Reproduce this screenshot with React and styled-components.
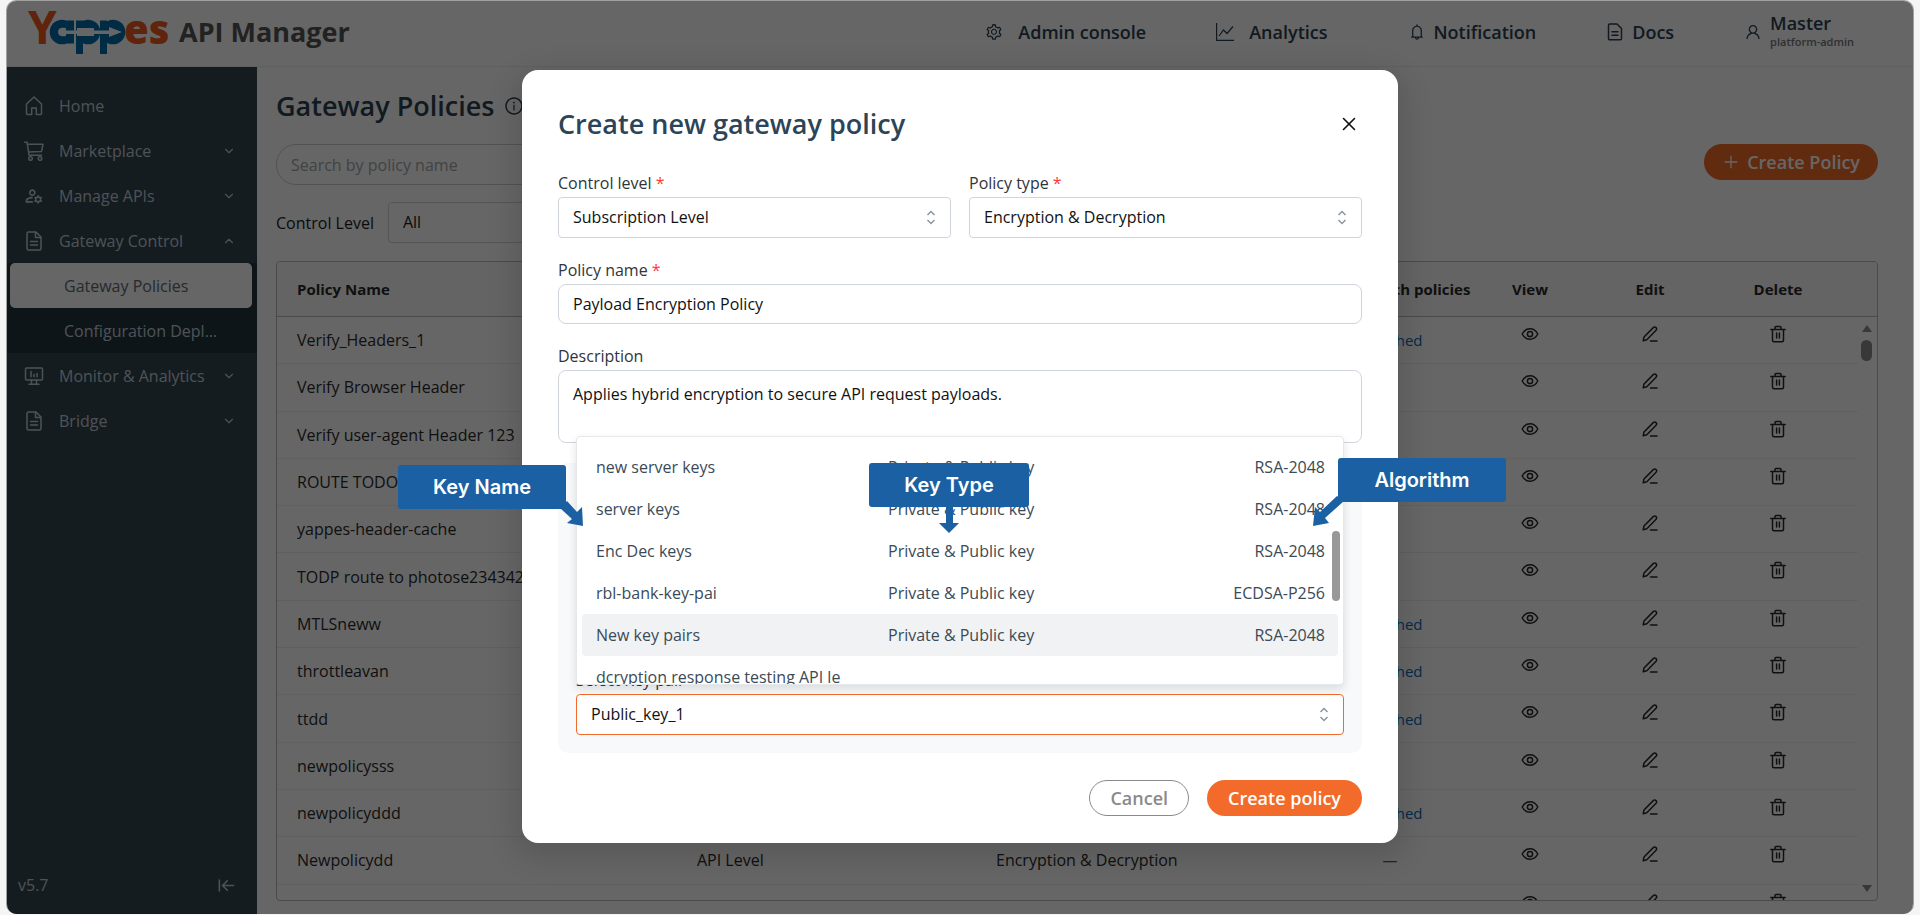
import React from 'react';
import styled, { createGlobalStyle } from 'styled-components';
import {
  AiOutlineSetting,
  AiOutlineBell,
  AiOutlineUser,
  AiOutlineInfoCircle,
  AiOutlinePlus,
} from 'react-icons/ai';
import { MdOutlineManageAccounts } from 'react-icons/md';
import { ArrowLeftToLine, ChevronDown, ChevronUp, X } from 'lucide-react';

const GlobalStyle = createGlobalStyle`
  *, *::before, *::after { box-sizing: border-box; }
  html, body, #root { height: 100%; }
  body {
    margin: 0;
    background: #f5f5f5;
    color: #1c1c1c;
    font-family: "Open Sans", "Noto Sans", sans-serif;
    font-size: 16px;
    line-height: 24px;
  }
  button, input, select, textarea { font: inherit; color: inherit; }
  button { border: 0; padding: 0; background: none; cursor: pointer; }
  a { color: inherit; text-decoration: none; }
  h1, h2, ul { margin: 0; padding: 0; }
  ul { list-style: none; }
`;

const Frame = styled.div`
  position: relative;
  display: flex;
  flex-direction: column;
  height: calc(100% - 1px);
  margin: 0 6px;
  border: 1px solid #a0a0a0;
  border-bottom: 0;
  border-radius: 10px;
  background: #fff;
  overflow: hidden;
`;

/* ---------- top bar ---------- */

const TopBar = styled.header`
  display: flex;
  align-items: center;
  flex: none;
  height: 66px;
  padding: 0 59px 4px 20px;
  border-bottom: 1px solid #f0f0f0;
`;

const Logo = styled.svg`
  width: 144px;
  height: 46px;
  overflow: visible;
`;

const Product = styled.span`
  margin-left: 8px;
  color: #555;
  font-size: 27px;
  font-weight: 700;
  line-height: 36px;
`;

const TopNav = styled.nav`
  display: flex;
  align-items: center;
  gap: 80px;
  margin-left: auto;
  color: #2c4150;
`;

const NavGroup = styled.div`
  display: flex;
  align-items: center;
  gap: 70px;
`;

const TopLink = styled.a`
  display: flex;
  align-items: center;
  gap: ${(p) => (p.$wide ? 15 : 8)}px;
  font-size: 18px;
  font-weight: 600;

  svg { width: 18px; height: 18px; }
`;

const Account = styled.span`
  display: flex;
  flex-direction: column;
  line-height: 20px;
`;

const Role = styled.small`
  color: #77797c;
  font-size: 11px;
  line-height: 18px;
`;

/* ---------- side bar ---------- */

const Body = styled.div`
  display: flex;
  flex: 1;
  min-height: 0;
`;

const SideBar = styled.aside`
  display: flex;
  flex-direction: column;
  flex: none;
  width: 250px;
  padding-top: 16px;
  background: #324652;
  color: #c2ced6;
`;

const SideLink = styled.a`
  display: flex;
  align-items: center;
  gap: 15px;
  height: 45px;
  padding: 0 21px 0 17px;

  > svg:first-child { width: 20px; height: 20px; }
  > svg:last-child:not(:first-child) { width: 14px; height: 14px; margin-left: auto; }
`;

const SideIcon = styled.svg`
  fill: none;
  stroke: currentColor;
  stroke-width: 1.5;
  stroke-linecap: round;
  stroke-linejoin: round;
`;

const SubMenu = styled.div`
  background: #243540;
`;

const SubLink = styled.a`
  display: block;
  height: 45px;
  margin: 0 5px 0 3px;
  padding: 0 30px 0 54px;
  border-radius: 5px;
  background: ${(p) => (p.$active ? '#fff' : 'transparent')};
  color: ${(p) => (p.$active ? '#5c6a75' : 'inherit')};
  line-height: 46px;
  white-space: nowrap;
  overflow: hidden;
  text-overflow: ellipsis;
`;

const SideFoot = styled.div`
  display: flex;
  align-items: center;
  justify-content: space-between;
  margin-top: auto;
  padding: 0 21px 17px 11px;

  button { display: flex; }
`;

/* ---------- main page ---------- */

const Main = styled.main`
  display: flex;
  flex-direction: column;
  flex: 1;
  min-width: 0;
  padding: 20px 35px 13px 19px;
`;

const PageTitle = styled.h1`
  display: flex;
  align-items: center;
  gap: 10px;
  color: #2c4150;
  font-size: 27px;
  font-weight: 600;
  line-height: 38px;

  svg { width: 20px; height: 20px; }
`;

const Tools = styled.div`
  display: flex;
  align-items: flex-start;
  justify-content: space-between;
  margin-top: 19px;
`;

const Search = styled.input`
  width: 360px;
  height: 41px;
  padding: 0 14px;
  border: 1px solid #c9ced3;
  border-radius: 20px;
  background: #fff;

  &::placeholder { color: #a3a7ab; opacity: 1; }
`;

const PrimaryButton = styled.button`
  display: flex;
  align-items: center;
  gap: 7px;
  height: 36px;
  padding: 0 ${(p) => (p.$wide ? 21 : 18)}px;
  border-radius: 18px;
  background: #f26b2a;
  color: #fff;
  font-size: 18px;
  font-weight: 600;
`;

const FilterRow = styled.div`
  display: flex;
  align-items: center;
  gap: 14px;
  margin: 17px 0 18px;
`;

const SelectBox = styled.span`
  position: relative;
  display: block;
  width: ${(p) => p.$width || 'auto'};

  select {
    appearance: none;
    display: block;
    width: 100%;
    height: 41px;
    padding: 0 36px 2px 14px;
    border: 1px solid ${(p) => (p.$focus ? '#f26b2a' : '#d0d5db')};
    border-radius: 4px;
    background: #fff;
    outline: 0;
  }

  > svg {
    position: absolute;
    top: 13px;
    right: 15px;
    pointer-events: none;
  }
`;

const TableBox = styled.div`
  position: relative;
  flex: 1;
  min-height: 0;
  border: 1px solid #b5b9be;
  border-radius: 4px;
  overflow: hidden;
`;

const Table = styled.table`
  width: 100%;
  height: 670px;
  table-layout: fixed;
  border-collapse: separate;
  border-spacing: 0;
  color: #2a2a2a;
`;

const Col = styled.col`
  width: ${(p) => p.$width};
`;

const HeadRow = styled.tr`
  height: 55px;

  th {
    padding: 0 0 0 20px;
    border-bottom: 1px solid #b5b9be;
    background: #fafafa;
    font-size: 15px;
    font-weight: 700;
    text-align: left;
    white-space: nowrap;
  }
`;

const ActionHead = styled.th`
  && { padding: 0; text-align: center; }
`;

const Cell = styled.td`
  padding: 0 0 0 20px;
  border-bottom: 1px solid #f0f0f0;
  white-space: nowrap;
  overflow: hidden;
`;

const ActionCell = styled.td`
  padding: 8px 0 0;
  border-bottom: 1px solid #f0f0f0;
  text-align: center;
  vertical-align: top;
`;

const IconButton = styled.button`
  display: inline-flex;
  color: #2a2a2a;
  vertical-align: top;
`;

const Status = styled.span`
  display: inline-block;
  width: 60px;
  color: #5a5468;
  font-size: 15px;
  text-align: center;

  a { color: #0a6ab8; }
`;

const ScrollRail = styled.div`
  position: absolute;
  top: 63px;
  right: 5px;
  bottom: 8px;
  display: flex;
  flex-direction: column;
  align-items: center;
  justify-content: space-between;
  width: 11px;
`;

const Thumb = styled.span`
  width: 11px;
  height: 21px;
  margin: 8px 0 auto;
  border-radius: 6px;
  background: #8c8c8c;
`;

/* ---------- dialog ---------- */

const Backdrop = styled.div`
  position: absolute;
  inset: 0;
  display: flex;
  align-items: flex-start;
  justify-content: center;
  padding-top: 69px;
  background: rgba(0, 0, 0, 0.6);
`;

const Dialog = styled.section`
  position: relative;
  width: 876px;
  max-width: 100%;
  padding: 35px 36px 27px;
  border-radius: 16px;
  background: #fff;
  box-shadow: 0 9px 28px 8px rgba(0, 0, 0, 0.12);
  color: #111;
`;

const DialogHead = styled.div`
  display: flex;
  align-items: center;
  justify-content: space-between;
  margin-bottom: 28px;

  h2 {
    color: #2c4457;
    font-size: 27px;
    font-weight: 600;
    line-height: 38px;
  }

  button { display: flex; margin-right: 2px; color: #111; }
`;

const Form = styled.form`
  display: flex;
  flex-direction: column;
  gap: 20px;
`;

const Pair = styled.div`
  display: grid;
  grid-template-columns: 1fr 1fr;
  gap: 18px;
`;

const Field = styled.div`
  display: flex;
  flex-direction: column;
  gap: 2px;

  label { color: #2f353b; }
`;

const Star = styled.span`
  color: #ff3b30;
`;

const TextInput = styled.input`
  height: 40px;
  padding: 0 14px;
  border: 1px solid #d0d5db;
  border-radius: 8px;
  background: #fff;
  outline: 0;
`;

const TextArea = styled.textarea`
  display: block;
  height: 73px;
  padding: 11px 14px;
  border: 1px solid #d0d5db;
  border-radius: 8px;
  background: #fff;
  outline: 0;
  resize: none;
`;

const KeyPanel = styled.div`
  display: flex;
  flex-direction: column;
  justify-content: flex-end;
  height: 290px;
  padding: 18px;
  border-radius: 10px;
  background: #f8f9fb;
`;

const Menu = styled.div`
  position: absolute;
  right: 0;
  bottom: calc(100% + 9px);
  left: 0;
  height: 249px;
  padding: 9px 5px 0;
  border: 1px solid #e6e9ec;
  border-radius: 4px;
  background: #fff;
  box-shadow: 0 4px 10px rgba(0, 0, 0, 0.12);
  overflow: hidden;
`;

const Option = styled.li`
  display: grid;
  grid-template-columns: 292px 1fr auto;
  align-items: center;
  height: 42px;
  padding: 0 13px 0 14px;
  border-radius: 4px;
  background: ${(p) => (p.$active ? '#f1f2f4' : 'transparent')};
  color: #3b4a57;
  white-space: nowrap;
`;

const MenuThumb = styled.span`
  position: absolute;
  top: 94px;
  right: 3px;
  width: 8px;
  height: 70px;
  border-radius: 4px;
  background: #989898;
`;

const Actions = styled.div`
  display: flex;
  justify-content: flex-end;
  gap: 18px;
  margin-top: 7px;
`;

const CancelButton = styled.button`
  height: 36px;
  padding: 0 20px;
  border: 1px solid #8a8a8a;
  border-radius: 18px;
  background: #fff;
  color: #8a8a8a;
  font-size: 18px;
  font-weight: 600;
`;

const Callout = styled.div`
  position: absolute;
  top: ${(p) => p.$top}px;
  left: ${(p) => p.$left}px;
  display: flex;
  align-items: center;
  justify-content: center;
  width: ${(p) => p.$width}px;
  height: 44px;
  border-radius: 3px;
  background: #1b60a2;
  color: #fff;
  font-family: Inter, "Liberation Sans", sans-serif;
  font-size: 20px;
  font-weight: 600;

  svg {
    position: absolute;
    top: ${(p) => p.$arrowTop}px;
    left: ${(p) => p.$arrowLeft}px;
    fill: #1b60a2;
  }
`;

/* ---------- drawings ---------- */

const YappesLogo = () => (
  <Logo viewBox="0 0 144 46" role="img" aria-label="Yappes">
    <g fill="#006cab">
      <circle cx="35" cy="23" r="12.300" />
      <circle cx="61" cy="23" r="12.300" />
      <circle cx="86" cy="23" r="12.300" />
      <path d="M40 11.500h7v23h-7zM49 11.500h7v33.500h-7zM73 11.500h7v33.500h-7z" />
    </g>
    <path
      d="M32 20q2-2 7-1v2.500h11V19h17v2.500h15V18l13 5-13 5v-3H67v2H50v-2H39v2q-5 1-7-1-2-3 0-6z"
      fill="#fff"
    />
    <g fill="#f05a22" fontFamily='"Open Sans", sans-serif'>
      <text x="1" y="35" fontSize="46" fontWeight="700">Y</text>
      <text x="97" y="35" fontSize="40" fontWeight="800">es</text>
    </g>
  </Logo>
);

const HomeIcon = () => (
  <SideIcon viewBox="0 0 20 20">
    <path d="M2.500 8 10 1l7.500 7v9.500a1 1 0 0 1-1 1h-4.200V12H7.700v6.500H3.500a1 1 0 0 1-1-1z" />
  </SideIcon>
);

const CartIcon = () => (
  <SideIcon viewBox="0 0 20 20">
    <path d="M.8 1.200H3l2 13h12.500M3.300 3.300H19l-1.500 7.200-12.700.6" />
    <circle cx="6.500" cy="17.500" r="1.800" />
    <circle cx="16" cy="17.500" r="1.800" />
  </SideIcon>
);

const FileIcon = () => (
  <SideIcon viewBox="0 0 20 20">
    <path d="M4.500 1h7.500l5 5v11.500a1.500 1.500 0 0 1-1.500 1.500h-11A1.500 1.500 0 0 1 3 17.500v-15A1.500 1.500 0 0 1 4.500 1zM11.500 1v5.500H17M6.500 10.500h7M6.500 14h7" />
  </SideIcon>
);

const MonitorIcon = () => (
  <SideIcon viewBox="0 0 20 20">
    <rect x="1.500" y="2" width="17" height="12" rx="1" />
    <path d="M7.500 14v4M12.500 14v4M5 18.200h10M7 5.500v5.200M10 8.500v2.200M13 7.500v3.200" />
  </SideIcon>
);

const ChartIcon = () => (
  <svg viewBox="0 0 18 18" fill="none" stroke="currentColor" strokeWidth="1.200">
    <path d="M.6 0v17.400H18M3 13l4.500-6 3.500 3.500L17 3.500" />
  </svg>
);

const DocIcon = () => (
  <svg viewBox="0 0 18 18" fill="none" stroke="currentColor" strokeWidth="1.500" strokeLinecap="round" strokeLinejoin="round">
    <path d="M3.800 1H11l4.500 4.500v10a1.300 1.300 0 0 1-1.300 1.300H3.800a1.300 1.300 0 0 1-1.300-1.300V2.300A1.300 1.300 0 0 1 3.800 1zM6 8.800h6M6 12.300h6" />
  </svg>
);

const Chevrons = () => (
  <svg width="10" height="15" viewBox="0 0 10 15" fill="none" stroke="#8d959e" strokeWidth="1.500">
    <path d="M1.500 5 5 1.500 8.500 5M1.500 10 5 13.500 8.500 10" />
  </svg>
);

const EyeIcon = () => (
  <svg width="18" height="18" viewBox="0 0 18 18" fill="none" stroke="currentColor" strokeWidth="1.500">
    <path d="M1.200 9C3 5.500 5.800 3.800 9 3.800S15 5.500 16.800 9C15 12.500 12.200 14.200 9 14.200S3 12.500 1.200 9z" />
    <circle cx="9" cy="9" r="2.600" />
  </svg>
);

const PenIcon = () => (
  <svg width="18" height="18" viewBox="0 0 18 18" fill="none" stroke="currentColor" strokeWidth="1.500" strokeLinecap="round" strokeLinejoin="round">
    <path d="M2.200 15.800 3 12 12.500 2.400q1.400-1 2.600.2t.2 2.500L5.800 14.800zM9.500 16h6.500" />
  </svg>
);

const TrashIcon = () => (
  <svg width="18" height="18" viewBox="0 0 18 18" fill="none" stroke="currentColor" strokeWidth="1.500" strokeLinecap="round" strokeLinejoin="round">
    <path d="M1.800 4.500h14.400M3.500 4.500V15.200a1.500 1.500 0 0 0 1.500 1.500h8a1.500 1.500 0 0 0 1.500-1.500V4.500M6 4.200V2.500A1 1 0 0 1 7 1.500h4a1 1 0 0 1 1 1v1.700M7.600 8v5M10.400 8v5" />
  </svg>
);

const Triangle = ({ down }) => (
  <svg width="10" height="7" viewBox="0 0 10 7" fill="#8c8c8c">
    <path d={down ? 'M0 0h10L5 7z' : 'M0 7h10L5 0z'} />
  </svg>
);

/* ---------- data ---------- */

const policies = [
  { name: 'Verify_Headers_1', attached: true },
  { name: 'Verify Browser Header' },
  { name: 'Verify user-agent Header 123' },
  { name: 'ROUTE TODO' },
  { name: 'yappes-header-cache' },
  { name: 'TODP route to photose2343423' },
  { name: 'MTLSneww', attached: true },
  { name: 'throttleavan', attached: true },
  { name: 'ttdd', attached: true },
  { name: 'newpolicysss' },
  { name: 'newpolicyddd', attached: true },
  { name: 'Newpolicydd', level: 'API Level', type: 'Encryption & Decryption', dash: true },
  { name: '' },
];

const keys = [
  ['new server keys', 'RSA-2048'],
  ['server keys', 'RSA-2048'],
  ['Enc Dec keys', 'RSA-2048'],
  ['rbl-bank-key-pai', 'ECDSA-P256'],
  ['New key pairs', 'RSA-2048'],
  ['dcryption response testing API le', ''],
];

const PolicyRow = ({ name, level, type, attached, dash }) => (
  <tr>
    <Cell>{name}</Cell>
    <Cell>{level}</Cell>
    <Cell>{type}</Cell>
    <Cell>
      <Status>
        {attached && <a href="#attached">Attached</a>}
        {dash && '—'}
      </Status>
    </Cell>
    <ActionCell><IconButton aria-label="View"><EyeIcon /></IconButton></ActionCell>
    <ActionCell><IconButton aria-label="Edit"><PenIcon /></IconButton></ActionCell>
    <ActionCell><IconButton aria-label="Delete"><TrashIcon /></IconButton></ActionCell>
    <td />
  </tr>
);

const SelectField = ({ id, label, value }) => (
  <Field>
    <label htmlFor={id}>{label} <Star>*</Star></label>
    <SelectBox>
      <select id={id} defaultValue={value}><option>{value}</option></select>
      <Chevrons />
    </SelectBox>
  </Field>
);

export default function App() {
  return (
    <>
      <GlobalStyle />
      <Frame>
        <TopBar>
          <YappesLogo />
          <Product>API Manager</Product>
          <TopNav>
            <NavGroup>
              <TopLink href="#admin" $wide><AiOutlineSetting />Admin console</TopLink>
              <TopLink href="#analytics" $wide><ChartIcon />Analytics</TopLink>
            </NavGroup>
            <NavGroup>
              <TopLink href="#notification"><AiOutlineBell />Notification</TopLink>
              <TopLink href="#docs"><DocIcon />Docs</TopLink>
              <TopLink href="#account">
                <AiOutlineUser />
                <Account>Master<Role>platform-admin</Role></Account>
              </TopLink>
            </NavGroup>
          </TopNav>
        </TopBar>

        <Body>
          <SideBar>
            <nav>
              <SideLink href="#home"><HomeIcon /><span>Home</span></SideLink>
              <SideLink href="#market"><CartIcon />Marketplace<ChevronDown /></SideLink>
              <SideLink href="#apis"><MdOutlineManageAccounts />Manage APIs<ChevronDown /></SideLink>
              <SideLink href="#control"><FileIcon />Gateway Control<ChevronUp /></SideLink>
              <SubMenu>
                <SubLink href="#policies" $active>Gateway Policies</SubLink>
                <SubLink href="#deploy">Configuration Deployment</SubLink>
              </SubMenu>
              <SideLink href="#monitor"><MonitorIcon />Monitor &amp; Analytics<ChevronDown /></SideLink>
              <SideLink href="#bridge"><FileIcon />Bridge<ChevronDown /></SideLink>
            </nav>
            <SideFoot>
              v5.7
              <button aria-label="Collapse menu"><ArrowLeftToLine size={19} strokeWidth={2} /></button>
            </SideFoot>
          </SideBar>

          <Main>
            <PageTitle>Gateway Policies <AiOutlineInfoCircle /></PageTitle>
            <Tools>
              <Search type="text" aria-label="Search" placeholder="Search by policy name" />
              <PrimaryButton><AiOutlinePlus />Create Policy</PrimaryButton>
            </Tools>
            <FilterRow>
              <label htmlFor="level-filter">Control Level</label>
              <SelectBox $width="200px">
                <select id="level-filter"><option>All</option></select>
                <Chevrons />
              </SelectBox>
            </FilterRow>
            <TableBox>
              <Table>
                <colgroup>
                  <Col $width="400px" />
                  <Col $width="299px" />
                  <Col />
                  <Col $width="118px" />
                  <Col $width="144px" />
                  <Col $width="96px" />
                  <Col $width="160px" />
                  <Col $width="19px" />
                </colgroup>
                <thead>
                  <HeadRow>
                    <th>Policy Name</th>
                    <th>Control Level</th>
                    <th>Policy Type</th>
                    <th>Attach policies</th>
                    <ActionHead>View</ActionHead>
                    <ActionHead>Edit</ActionHead>
                    <ActionHead>Delete</ActionHead>
                    <th />
                  </HeadRow>
                </thead>
                <tbody>
                  {policies.map((p, i) => <PolicyRow key={i} {...p} />)}
                </tbody>
              </Table>
              <ScrollRail>
                <Triangle />
                <Thumb />
                <Triangle down />
              </ScrollRail>
            </TableBox>
          </Main>
        </Body>

        <Backdrop>
          <Dialog role="dialog" aria-labelledby="dialog-title">
            <DialogHead>
              <h2 id="dialog-title">Create new gateway policy</h2>
              <button aria-label="Close"><X size={22} strokeWidth={1.75} /></button>
            </DialogHead>
            <Form>
              <Pair>
                <SelectField id="control-level" label="Control level" value="Subscription Level" />
                <SelectField id="policy-type" label="Policy type" value="Encryption & Decryption" />
              </Pair>
              <Field>
                <label htmlFor="policy-name">Policy name <Star>*</Star></label>
                <TextInput id="policy-name" defaultValue="Payload Encryption Policy" />
              </Field>
              <Field>
                <label htmlFor="description">Description</label>
                <TextArea
                  id="description"
                  defaultValue="Applies hybrid encryption to secure API request payloads."
                />
              </Field>
              <KeyPanel>
                <Field>
                  <label htmlFor="key-pair">Select Key pair</label>
                  <SelectBox $focus>
                    <select id="key-pair"><option>Public_key_1</option></select>
                    <Chevrons />
                    <Menu>
                      <ul role="listbox" aria-label="Key pairs">
                        {keys.map(([name, algorithm]) => (
                          <Option key={name} role="option" $active={name === 'New key pairs'}>
                            <span>{name}</span>
                            <span>{algorithm && 'Private & Public key'}</span>
                            <span>{algorithm}</span>
                          </Option>
                        ))}
                      </ul>
                      <MenuThumb />
                    </Menu>
                  </SelectBox>
                </Field>
              </KeyPanel>
              <Actions>
                <CancelButton type="button">Cancel</CancelButton>
                <PrimaryButton type="button" $wide>Create policy</PrimaryButton>
              </Actions>
            </Form>

            <Callout $top={395} $left={-124} $width={168} $arrowTop={36} $arrowLeft={162}>
              Key Name
              <svg width="24" height="26" viewBox="0 0 24 26">
                <path d="M0 7 7 0l10 11 5-5 1 19-16-3 5-4z" />
              </svg>
            </Callout>
            <Callout $top={393} $left={347} $width={160} $arrowTop={43} $arrowLeft={70}>
              Key Type
              <svg width="20" height="27" viewBox="0 0 20 27">
                <path d="M7 0h7v17h6L10 27 0 17h7z" />
              </svg>
            </Callout>
            <Callout $top={388} $left={816} $width={168} $arrowTop={38} $arrowLeft={-25}>
              Algorithm
              <svg width="31" height="30" viewBox="0 0 31 30">
                <path d="M24 0 31 5 12 22l4 5-16 3 2-19 5 5z" />
              </svg>
            </Callout>
          </Dialog>
        </Backdrop>
      </Frame>
    </>
  );
}
